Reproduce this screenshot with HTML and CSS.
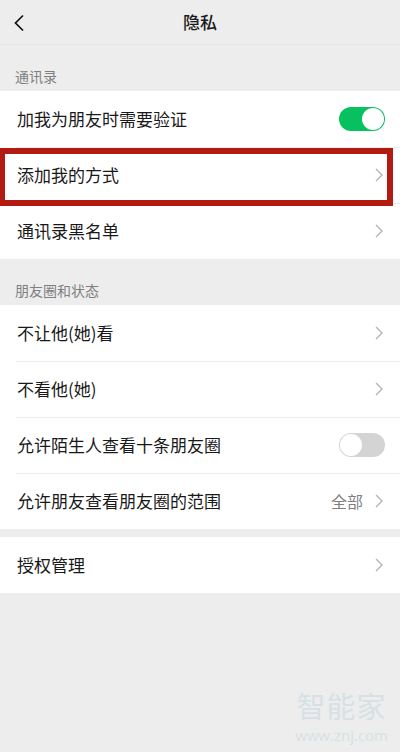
FILE: index.html
```html
<!DOCTYPE html>
<html lang="zh">
<head>
<meta charset="utf-8">
<title>隐私</title>
<link rel="stylesheet" href="styles.css">
</head>
<body>
<div class="page">
  <header class="nav">
    <svg class="back" width="12" height="18" viewBox="0 0 12 18"><polyline points="10,1.5 2.5,9 10,16.5" fill="none" stroke="#111" stroke-width="1.7"/></svg>
    <div class="title">隐私</div>
  </header>

  <div class="label">通讯录</div>
  <div class="group">
    <div class="row">
      <span class="text">加我为朋友时需要验证</span>
      <span class="switch on"><span class="knob"></span></span>
    </div>
    <div class="row marked">
      <span class="text">添加我的方式</span>
      <svg class="chev" width="8" height="14" viewBox="0 0 8 14"><polyline points="1,1 7,7 1,13" fill="none" stroke="#b2b2b2" stroke-width="1.3"/></svg>
    </div>
    <div class="row">
      <span class="text">通讯录黑名单</span>
      <svg class="chev" width="8" height="14" viewBox="0 0 8 14"><polyline points="1,1 7,7 1,13" fill="none" stroke="#b2b2b2" stroke-width="1.3"/></svg>
    </div>
  </div>

  <div class="label">朋友圈和状态</div>
  <div class="group">
    <div class="row">
      <span class="text">不让他(她)看</span>
      <svg class="chev" width="8" height="14" viewBox="0 0 8 14"><polyline points="1,1 7,7 1,13" fill="none" stroke="#b2b2b2" stroke-width="1.3"/></svg>
    </div>
    <div class="row">
      <span class="text">不看他(她)</span>
      <svg class="chev" width="8" height="14" viewBox="0 0 8 14"><polyline points="1,1 7,7 1,13" fill="none" stroke="#b2b2b2" stroke-width="1.3"/></svg>
    </div>
    <div class="row">
      <span class="text">允许陌生人查看十条朋友圈</span>
      <span class="switch off"><span class="knob"></span></span>
    </div>
    <div class="row">
      <span class="text">允许朋友查看朋友圈的范围</span>
      <span class="value">全部</span>
      <svg class="chev" width="8" height="14" viewBox="0 0 8 14"><polyline points="1,1 7,7 1,13" fill="none" stroke="#b2b2b2" stroke-width="1.3"/></svg>
    </div>
  </div>

  <div class="gap"></div>
  <div class="group">
    <div class="row">
      <span class="text">授权管理</span>
      <svg class="chev" width="8" height="14" viewBox="0 0 8 14"><polyline points="1,1 7,7 1,13" fill="none" stroke="#b2b2b2" stroke-width="1.3"/></svg>
    </div>
  </div>

  <div class="watermark">
    <div class="wm-big">智能家</div>
    <div class="wm-small">www.znj.com</div>
  </div>
</div>
</body>
</html>
```

FILE: styles.css
```css
*, *::before, *::after { box-sizing: border-box; }
html, body {
  margin: 0;
  padding: 0;
  background: #ededed;
}
body {
  font-family: "Noto Sans CJK SC", "Noto Sans", sans-serif;
  color: #191919;
}
.page {
  position: relative;
  width: 400px;
  height: 752px;
  overflow: hidden;
  background: #ededed;
}
.nav {
  position: relative;
  height: 45px;
  display: flex;
  align-items: center;
  justify-content: center;
  border-bottom: 1px solid #e6e6e6;
}
.back {
  position: absolute;
  left: 13px;
  top: 14px;
}
.title {
  font-size: 17px;
  line-height: 20px;
  font-weight: 500;
  color: #191919;
}
.label {
  height: 46px;
  padding: 21px 0 0 15px;
  font-size: 14px;
  line-height: 20px;
  color: #7f7f7f;
}
.group {
  background: #fff;
}
.row {
  position: relative;
  height: 56px;
  display: flex;
  align-items: center;
  padding: 0 17px 0 17px;
}
.row + .row::before {
  content: "";
  position: absolute;
  left: 16px;
  right: 0;
  top: 0;
  border-top: 1px solid #ececec;
}
.text {
  flex: 1;
  font-size: 17px;
  line-height: 24px;
  color: #191919;
}
.value {
  font-size: 16px;
  line-height: 24px;
  color: #7f7f7f;
  margin-right: 12px;
}
.chev {
  display: block;
}
.switch {
  position: relative;
  width: 46px;
  height: 24px;
  border-radius: 12px;
  margin-right: -2px;
}
.switch.on { background: #07c160; }
.switch.off { background: #d4d4d4; }
.knob {
  position: absolute;
  top: 1px;
  width: 22px;
  height: 22px;
  border-radius: 50%;
  background: #fff;
}
.switch.on .knob { right: 1px; }
.switch.off .knob { left: 1px; }
.marked::after {
  content: "";
  position: absolute;
  left: -1px;
  top: 1px;
  width: 394px;
  height: 58px;
  border: 6px solid #b31a12;
  z-index: 2;
}
.gap {
  height: 8px;
}
.watermark {
  position: absolute;
  right: 12px;
  top: 686px;
  display: flex;
  flex-direction: column;
  align-items: center;
  gap: 2px;
  color: #d6e1e5;
}
.wm-big {
  font-size: 29px;
  line-height: 38px;
  letter-spacing: 1px;
}
.wm-small {
  font-family: "Open Sans", "Liberation Sans", sans-serif;
  font-size: 15px;
  line-height: 18px;
}
```
